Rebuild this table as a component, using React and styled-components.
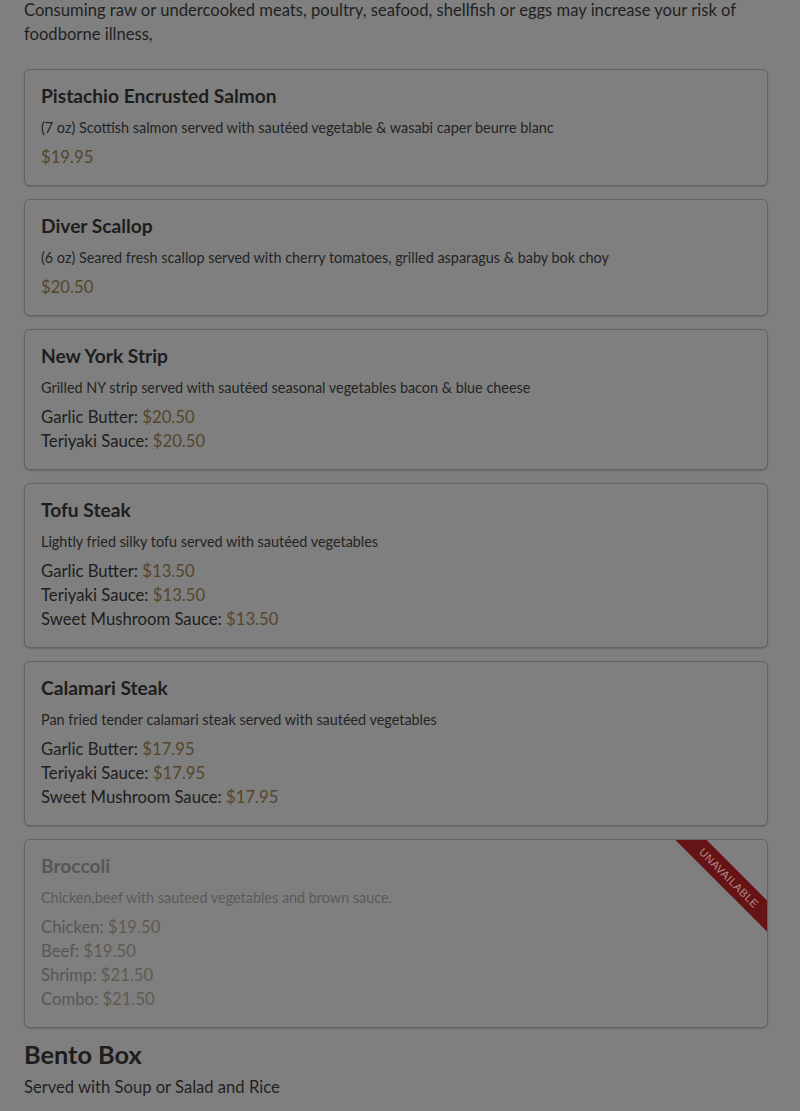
import React from "react";
import styled, { createGlobalStyle } from "styled-components";

const GlobalStyle = createGlobalStyle`
  html, body {
    margin: 0;
    padding: 0;
    background: #7f7f7f;
  }
  body {
    font-family: Lato, "Noto Sans", "Liberation Sans", sans-serif;
    color: #1f1f1f;
    overflow: hidden;
  }
`;

const Page = styled.div`
  padding: 0 32px 0 24px;
  margin-top: -2px;
`;

const Notice = styled.p`
  margin: 0 0 23px;
  font-size: 16.6px;
  line-height: 24px;
  color: #1f1f1f;
`;

const List = styled.div`
  display: flex;
  flex-direction: column;
  gap: 13px;
`;

const Card = styled.div`
  position: relative;
  overflow: hidden;
  border: 1px solid #626262;
  border-radius: 6px;
  padding: 14px 16px 16px;
  background: #7f7f7f;
  box-shadow: 0 1px 2px rgba(0, 0, 0, 0.18);
  color: ${(p) => (p.$off ? "#565656" : "#1d1d1d")};
`;

const Title = styled.h3`
  margin: 0;
  font-size: 19.2px;
  line-height: 24px;
  font-weight: 700;
`;

const Desc = styled.p`
  margin: 10px 0 7px;
  font-size: 14.4px;
  line-height: 20px;
  color: ${(p) => (p.$off ? "#5a5a5a" : "#242424")};
`;

const PriceLine = styled.div`
  font-size: 16.7px;
  line-height: 24px;
`;

const Price = styled.span`
  color: ${(p) => (p.$off ? "#5f5a50" : "#56452a")};
`;

const Ribbon = styled.div`
  position: absolute;
  top: 27px;
  right: -42px;
  width: 160px;
  height: 22px;
  background: #661315;
  color: #b38c8c;
  font-size: 11px;
  letter-spacing: 0.5px;
  line-height: 22px;
  text-align: center;
  text-transform: uppercase;
  font-family: "Liberation Sans", Arial, sans-serif;
  transform: rotate(45deg);
`;

const Section = styled.h2`
  margin: 11px 0 6px;
  font-size: 25.3px;
  line-height: 30px;
  font-weight: 700;
  color: #1d1d1d;
`;

const Sub = styled.p`
  margin: 0;
  font-size: 16.6px;
  line-height: 24px;
  color: #1f1f1f;
`;

const items = [
  {
    name: "Pistachio Encrusted Salmon",
    desc: "(7 oz) Scottish salmon served with sautéed vegetable & wasabi caper beurre blanc",
    prices: [["", "$19.95"]],
  },
  {
    name: "Diver Scallop",
    desc: "(6 oz) Seared fresh scallop served with cherry tomatoes, grilled asparagus & baby bok choy",
    prices: [["", "$20.50"]],
  },
  {
    name: "New York Strip",
    desc: "Grilled NY strip served with sautéed seasonal vegetables bacon & blue cheese",
    prices: [
      ["Garlic Butter", "$20.50"],
      ["Teriyaki Sauce", "$20.50"],
    ],
  },
  {
    name: "Tofu Steak",
    desc: "Lightly fried silky tofu served with sautéed vegetables",
    prices: [
      ["Garlic Butter", "$13.50"],
      ["Teriyaki Sauce", "$13.50"],
      ["Sweet Mushroom Sauce", "$13.50"],
    ],
  },
  {
    name: "Calamari Steak",
    desc: "Pan fried tender calamari steak served with sautéed vegetables",
    prices: [
      ["Garlic Butter", "$17.95"],
      ["Teriyaki Sauce", "$17.95"],
      ["Sweet Mushroom Sauce", "$17.95"],
    ],
  },
  {
    name: "Broccoli",
    desc: "Chicken,beef with sauteed vegetables and brown sauce.",
    off: true,
    prices: [
      ["Chicken", "$19.50"],
      ["Beef", "$19.50"],
      ["Shrimp", "$21.50"],
      ["Combo", "$21.50"],
    ],
  },
];

export default function App() {
  return (
    <>
      <GlobalStyle />
      <Page>
        <Notice>
          Consuming raw or undercooked meats, poultry, seafood, shellfish or eggs may increase your risk of foodborne illness,
        </Notice>
        <List>
          {items.map((it) => (
            <Card key={it.name} $off={it.off}>
              {it.off && <Ribbon>Unavailable</Ribbon>}
              <Title>{it.name}</Title>
              <Desc $off={it.off}>{it.desc}</Desc>
              {it.prices.map(([label, price]) => (
                <PriceLine key={label + price}>
                  {label && `${label}: `}
                  <Price $off={it.off}>{price}</Price>
                </PriceLine>
              ))}
            </Card>
          ))}
        </List>
        <Section>Bento Box</Section>
        <Sub>Served with Soup or Salad and Rice</Sub>
      </Page>
    </>
  );
}
